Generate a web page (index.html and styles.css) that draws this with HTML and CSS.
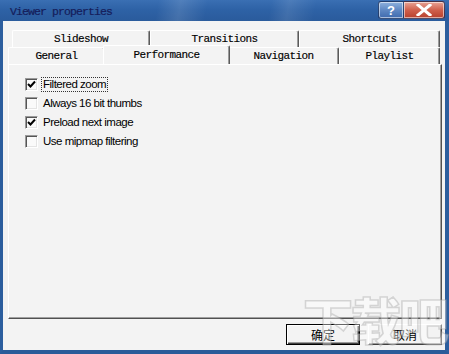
FILE: index.html
```html
<!DOCTYPE html>
<html>
<head>
<meta charset="utf-8">
<link rel="stylesheet" href="styles.css">
</head>
<body>
<div class="window">
  <div class="titlebar">
    <span class="title">Viewer properties</span>
    <div class="caption-buttons">
      <span class="cbtn help">?</span>
      <span class="cbtn close">
        <svg width="16" height="12" viewBox="0 0 16 12"><path d="M2 1 L14 11 M14 1 L2 11" stroke="#fff" stroke-width="3" stroke-linecap="square"/></svg>
      </span>
    </div>
  </div>
  <div class="client">
    <div class="tabs">
      <div class="tabrow back">
        <div class="tab t-slideshow">Slideshow</div>
        <div class="tab t-transitions">Transitions</div>
        <div class="tab t-shortcuts">Shortcuts</div>
      </div>
      <div class="tabrow front">
        <div class="tab t-general">General</div>
        <div class="tab t-performance selected">Performance</div>
        <div class="tab t-navigation">Navigation</div>
        <div class="tab t-playlist">Playlist</div>
      </div>
    </div>
    <div class="panel">
      <div class="check"><span class="box checked"><svg width="9" height="9" viewBox="0 0 9 9"><path d="M1 4 L3.5 6.5 L8 1.5" fill="none" stroke="#000" stroke-width="2"/></svg></span><span class="label focus">Filtered zoom</span></div>
      <div class="check"><span class="box"></span><span class="label">Always 16 bit thumbs</span></div>
      <div class="check"><span class="box checked"><svg width="9" height="9" viewBox="0 0 9 9"><path d="M1 4 L3.5 6.5 L8 1.5" fill="none" stroke="#000" stroke-width="2"/></svg></span><span class="label">Preload next image</span></div>
      <div class="check"><span class="box"></span><span class="label">Use mipmap filtering</span></div>
    </div>
    <div class="buttons">
      <button class="btn default">确定</button>
      <button class="btn">取消</button>
    </div>
    <div class="watermark" aria-hidden="true">下载吧</div>
  </div>
</div>
</body>
</html>
```
FILE: styles.css
```css
html, body {
  margin: 0;
  padding: 0;
}
body {
  width: 449px;
  height: 354px;
  overflow: hidden;
  background: #2a5b9a;
}
.window {
  display: flex;
  flex-direction: column;
  width: 449px;
  height: 354px;
  box-sizing: border-box;
  border-left: 3px solid #2c5e9e;
  border-right: 4px solid #2c5e9e;
  border-bottom: 4px solid #2a5b99;
  position: relative;
}
.titlebar {
  height: 21px;
  flex: none;
  display: flex;
  align-items: center;
  justify-content: space-between;
  background:
    linear-gradient(100deg, rgba(255,255,255,0) 35%, rgba(255,255,255,0.12) 40%, rgba(255,255,255,0) 46%, rgba(255,255,255,0) 60%, rgba(255,255,255,0.1) 64%, rgba(255,255,255,0) 70%),
    linear-gradient(180deg, #3a6fb3 0%, #2e62a6 45%, #2a5b9c 100%);
  margin: 0 -4px 0 -3px;
  padding: 0 4px 0 10px;
}
.title {
  font-family: "Liberation Mono", monospace;
  font-size: 11.5px;
  letter-spacing: -0.9px;
  color: #151d5a;
  margin-top: 2px;
  -webkit-text-stroke: 0.2px #151d5a;
}
.caption-buttons {
  display: flex;
  align-self: flex-start;
  margin-top: 1px;
}
.cbtn {
  display: flex;
  align-items: center;
  justify-content: center;
  height: 18px;
  box-sizing: border-box;
  border: 1px solid rgba(20,40,80,0.7);
  box-shadow: inset 0 0 0 1px rgba(255,255,255,0.55);
  border-radius: 3px;
  font-family: "Liberation Sans", sans-serif;
  font-weight: bold;
  color: #fff;
}
.help {
  width: 26px;
  font-size: 13px;
  background: linear-gradient(180deg, #8fb2de 0%, #5f88c3 50%, #3e6aae 100%);
  border-radius: 3px 0 0 3px;
}
.close {
  width: 41px;
  background: linear-gradient(180deg, #e8a496 0%, #d0604c 50%, #b8402c 100%);
  border-radius: 0 3px 3px 0;
  border-left: none;
}
.client {
  flex: 1;
  background: #f3f3f3;
  display: flex;
  flex-direction: column;
  padding: 9px 3px 0 5px;
  position: relative;
}
.tabs {
  display: flex;
  flex-direction: column;
}
.tabrow {
  display: flex;
  height: 17px;
}
.tabrow.back {
  margin-left: 4px;
}
.tab {
  box-sizing: border-box;
  height: 17px;
  display: flex;
  align-items: center;
  justify-content: center;
  font-family: "Liberation Mono", monospace;
  font-size: 11px;
  letter-spacing: -0.6px;
  color: #000;
  -webkit-text-stroke: 0.15px #000;
  border-top: 1px solid #ffffff;
  border-left: 1px solid #ffffff;
  border-right: 1px solid #5a5a5a;
  box-shadow: inset -1px 0 #9a9a9a;
  border-radius: 2px 2px 0 0;
}
.t-slideshow { width: 138px; }
.t-transitions { width: 149px; }
.t-shortcuts { width: 141px; }
.t-general { width: 97px; }
.t-performance { width: 123px; }
.t-navigation { width: 111px; }
.t-playlist { width: 101px; }
.tab.selected {
  background: #f3f3f3;
  height: 19px;
  margin: -2px -2px -1px -2px;
  width: 127px;
  position: relative;
  z-index: 2;
  padding-bottom: 1px;
}
.panel {
  box-sizing: border-box;
  width: 434px;
  height: 255px;
  border-top: 1px solid #ffffff;
  border-left: 1px solid #ffffff;
  border-right: 1px solid #505050;
  border-bottom: 1px solid #505050;
  box-shadow: inset -1px -1px #a0a0a0;
  padding: 10px 0 0 16px;
  display: flex;
  flex-direction: column;
}
.check {
  display: flex;
  align-items: center;
  height: 19px;
  font-family: "Liberation Sans", Arial, sans-serif;
  font-size: 11.5px;
  letter-spacing: -0.5px;
  color: #000;
}
.box {
  box-sizing: border-box;
  width: 13px;
  height: 13px;
  flex: none;
  background: #fafafa;
  border-top: 1px solid #9a9a9a;
  border-left: 1px solid #9a9a9a;
  border-right: 1px solid #ffffff;
  border-bottom: 1px solid #ffffff;
  box-shadow: inset 1px 1px #555555, inset -1px -1px #e4e4e4;
  display: flex;
  align-items: center;
  justify-content: center;
}
.label {
  margin-left: 3px;
  padding: 0 1px;
  border: 1px dotted transparent;
  line-height: 13px;
}
.label.focus {
  border-color: #333;
}
.buttons {
  display: flex;
  justify-content: flex-end;
  gap: 8px;
  margin-top: 5px;
  padding-right: 0;
}
.btn {
  box-sizing: border-box;
  width: 74px;
  height: 21px;
  padding: 0;
  font-family: "Noto Sans CJK SC", sans-serif;
  font-size: 12px;
  line-height: 1;
  color: #000;
  background: #f3f3f3;
  border-top: 1px solid #ffffff;
  border-left: 1px solid #ffffff;
  border-right: 1px solid #404040;
  border-bottom: 1px solid #404040;
  box-shadow: inset -1px -1px #9a9a9a;
}
.btn.default {
  border: 1px solid #000;
  box-shadow: inset 1px 1px #ffffff, inset -1px -1px #404040, inset -2px -2px #9a9a9a;
}
.watermark {
  position: absolute;
  right: -2px;
  bottom: 4px;
  font-family: "Noto Sans CJK SC", sans-serif;
  font-weight: 900;
  font-size: 50px;
  line-height: 56px;
  letter-spacing: -2px;
  color: rgba(255,255,255,0.4);
  -webkit-text-stroke: 1.5px rgba(150,150,150,0.35);
  pointer-events: none;
}
```
